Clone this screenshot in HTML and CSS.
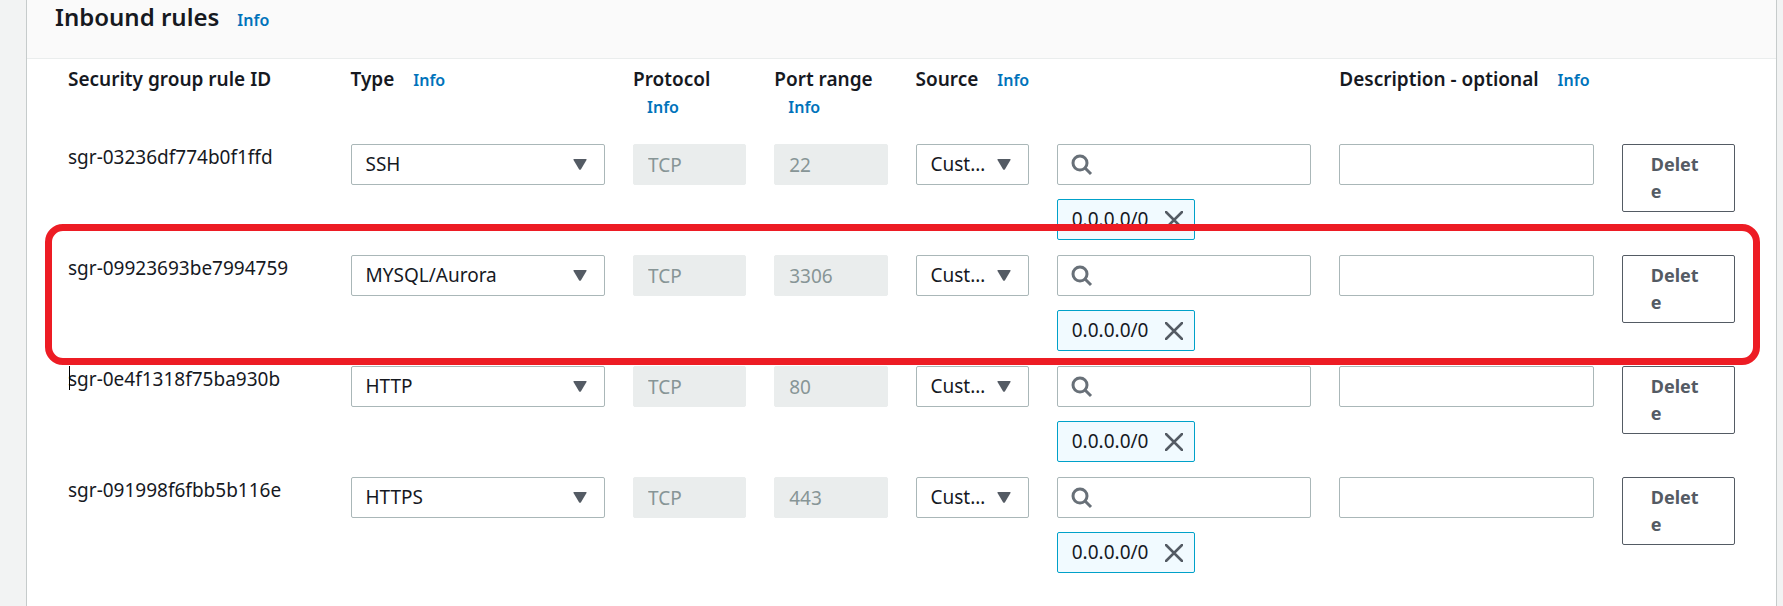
FILE: index.html
```html
<!DOCTYPE html>
<html lang="en">
<head>
<meta charset="utf-8">
<title>Inbound rules</title>
<link rel="stylesheet" href="styles.css">
</head>
<body>
<svg class="sprite" aria-hidden="true">
  <symbol id="caret" viewBox="0 0 14 11"><path d="M1 0h12q1 0 .5 1L8 10.300q-1 1-2 0L.5 1Q0 0 1 0z" fill="#545b64"/></symbol>
  <symbol id="search" viewBox="0 0 22 22"><circle cx="9" cy="9" r="7" fill="none" stroke="#687078" stroke-width="3"/><path d="M14 14l6 6" stroke="#687078" stroke-width="3"/></symbol>
  <symbol id="close" viewBox="0 0 18 18"><path d="M1 1l16 16M17 1L1 17" stroke="#545b64" stroke-width="2.500" fill="none" stroke-linecap="round"/></symbol>
</svg>
<main class="panel">
  <header class="panel-header">
    <h2 class="title">Inbound rules</h2>
    <a class="info" href="#">Info</a>
  </header>
  <table class="rules">
    <thead>
      <tr class="row head">
        <th class="wide">Security group rule ID</th>
        <th class="wide">Type <a class="info" href="#">Info</a></th>
        <th>Protocol <a class="info" href="#">Info</a></th>
        <th>Port range <a class="info" href="#">Info</a></th>
        <th class="triple">Source <a class="info" href="#">Info</a></th>
        <th class="wide">Description - optional <a class="info" href="#">Info</a></th>
      </tr>
    </thead>
    <tbody>
      <tr class="row">
        <td class="wide">sgr-03236df774b0f1ffd</td>
        <td class="wide"><div class="select"><select aria-label="Type"><option>SSH</option></select><svg class="caret"><use href="#caret"/></svg></div></td>
        <td><input class="field" aria-label="Protocol" value="TCP" disabled></td>
        <td><input class="field" aria-label="Port range" value="22" disabled></td>
        <td><div class="select"><select aria-label="Source"><option>Custom</option></select><svg class="caret"><use href="#caret"/></svg></div></td>
        <td class="wide source"><div class="search"><svg class="glass"><use href="#search"/></svg><input class="field" type="search" aria-label="Source CIDR"></div>
          <span class="token">0.0.0.0/0<button class="close" aria-label="Remove"><svg class="cross"><use href="#close"/></svg></button></span></td>
        <td class="wide"><input class="field" aria-label="Description"></td>
        <td><button class="delete">Delete</button></td>
      </tr>
      <tr class="row marked">
        <td class="wide">sgr-09923693be7994759</td>
        <td class="wide"><div class="select"><select aria-label="Type"><option>MYSQL/Aurora</option></select><svg class="caret"><use href="#caret"/></svg></div></td>
        <td><input class="field" aria-label="Protocol" value="TCP" disabled></td>
        <td><input class="field" aria-label="Port range" value="3306" disabled></td>
        <td><div class="select"><select aria-label="Source"><option>Custom</option></select><svg class="caret"><use href="#caret"/></svg></div></td>
        <td class="wide source"><div class="search"><svg class="glass"><use href="#search"/></svg><input class="field" type="search" aria-label="Source CIDR"></div>
          <span class="token">0.0.0.0/0<button class="close" aria-label="Remove"><svg class="cross"><use href="#close"/></svg></button></span></td>
        <td class="wide"><input class="field" aria-label="Description"></td>
        <td><button class="delete">Delete</button></td>
      </tr>
      <tr class="row">
        <td class="wide cursor">sgr-0e4f1318f75ba930b</td>
        <td class="wide"><div class="select"><select aria-label="Type"><option>HTTP</option></select><svg class="caret"><use href="#caret"/></svg></div></td>
        <td><input class="field" aria-label="Protocol" value="TCP" disabled></td>
        <td><input class="field" aria-label="Port range" value="80" disabled></td>
        <td><div class="select"><select aria-label="Source"><option>Custom</option></select><svg class="caret"><use href="#caret"/></svg></div></td>
        <td class="wide source"><div class="search"><svg class="glass"><use href="#search"/></svg><input class="field" type="search" aria-label="Source CIDR"></div>
          <span class="token">0.0.0.0/0<button class="close" aria-label="Remove"><svg class="cross"><use href="#close"/></svg></button></span></td>
        <td class="wide"><input class="field" aria-label="Description"></td>
        <td><button class="delete">Delete</button></td>
      </tr>
      <tr class="row">
        <td class="wide">sgr-091998f6fbb5b116e</td>
        <td class="wide"><div class="select"><select aria-label="Type"><option>HTTPS</option></select><svg class="caret"><use href="#caret"/></svg></div></td>
        <td><input class="field" aria-label="Protocol" value="TCP" disabled></td>
        <td><input class="field" aria-label="Port range" value="443" disabled></td>
        <td><div class="select"><select aria-label="Source"><option>Custom</option></select><svg class="caret"><use href="#caret"/></svg></div></td>
        <td class="wide source"><div class="search"><svg class="glass"><use href="#search"/></svg><input class="field" type="search" aria-label="Source CIDR"></div>
          <span class="token">0.0.0.0/0<button class="close" aria-label="Remove"><svg class="cross"><use href="#close"/></svg></button></span></td>
        <td class="wide"><input class="field" aria-label="Description"></td>
        <td><button class="delete">Delete</button></td>
      </tr>
    </tbody>
  </table>
</main>
</body>
</html>
```

FILE: styles.css
```css
* { box-sizing: border-box; }
body {
  margin: 0;
  padding: 0 6px 0 26px;
  background: #f2f3f3;
  color: #16191f;
  font: 19px/27px "Noto Sans", sans-serif;
}
.sprite { position: absolute; width: 0; height: 0; }
.panel {
  min-height: 100vh;
  background: #fff;
  border: solid #c6cbcb;
  border-width: 0 1px;
}
.panel-header {
  display: flex;
  align-items: baseline;
  gap: 4px;
  padding: 0 28px 24px;
  background: #fafafa;
  border-bottom: 1px solid #eaeded;
}
.title { margin: 0; font-size: 24px; line-height: 34px; font-weight: 600; }
.info {
  display: inline-block;
  margin-left: 14px;
  color: #0073bb;
  font-size: 16px;
  font-weight: 600;
  text-decoration: none;
}
.rules { display: block; padding: 7px 41px 32px; }
.rules thead { display: block; padding-bottom: 23px; }
.rules tbody { display: grid; gap: 15px; }
.row {
  position: relative;
  display: grid;
  grid-template-columns: repeat(12, minmax(0, 1fr));
  column-gap: 28px;
  align-items: start;
}
th, td { display: block; padding: 0; text-align: left; }
th { font-weight: 600; }
.wide { grid-column: span 2; }
.triple { grid-column: span 3; }
.select, .search { display: grid; align-items: center; }
.select > *, .search > * { grid-area: 1 / 1; }
select, .field {
  display: block;
  width: 100%;
  height: 41px;
  margin: 0;
  padding: 0 14px;
  appearance: none;
  background: #fff;
  border: 1px solid #aab7b8;
  border-radius: 2px;
  color: #16191f;
  font: inherit;
}
select { padding-right: 38px; text-overflow: ellipsis; }
.field:disabled { background: #eaeded; border-color: #eaeded; color: #879596; }
.caret { z-index: 1; justify-self: end; width: 14px; height: 11px; margin-right: 18px; pointer-events: none; }
.glass { z-index: 1; width: 22px; height: 22px; margin-left: 14px; pointer-events: none; }
.search .field { padding-left: 42px; }
.source { display: grid; justify-items: start; gap: 14px; }
.search { width: 100%; }
.token {
  display: flex;
  align-items: center;
  gap: 17px;
  height: 41px;
  padding: 0 11px 0 14px;
  background: #f1faff;
  border: 1px solid #00a1c9;
  border-radius: 2px;
}
.close { display: flex; padding: 0; border: 0; background: none; }
.cross { width: 18px; height: 18px; }
.delete {
  width: 100%;
  padding: 6px 28px;
  background: #fff;
  border: 1px solid #545b64;
  border-radius: 2px;
  color: #545b64;
  font: inherit;
  font-size: 18px;
  font-weight: 700;
  text-align: left;
  word-break: break-all;
}
.marked::after {
  content: "";
  position: absolute;
  z-index: 2;
  inset: -31px -25px -14px -23px;
  border: 7px solid #ed1c24;
  border-radius: 18px;
  pointer-events: none;
}
.cursor { position: relative; }
.cursor::before {
  content: "";
  position: absolute;
  inset: 0 auto auto 1px;
  width: 1px;
  height: 24px;
  background: #000;
}
```
